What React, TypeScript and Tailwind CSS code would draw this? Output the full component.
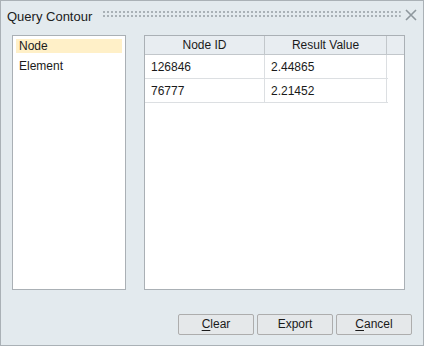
import React from "react";

const rows = [
  { id: "126846", v: "2.44865" },
  { id: "76777", v: "2.21452" },
];

export default function App() {
  return (
    <div
      className="w-[424px] h-[346px] border border-[#aab1b6] bg-[#e3eaee] flex flex-col text-[12px] text-[#1a1a1a]"
      style={{ fontFamily: '"Liberation Sans", Arial, sans-serif' }}
    >
      <div className="h-[34px] flex items-start pt-[7px] pl-[6px] pr-[6px]">
        <span className="text-[13px] leading-[17px] text-[#202020]">Query Contour</span>
        <svg className="ml-[11px] mt-[3px] flex-1 h-[8px]" height="8">
          <defs>
            <pattern id="dots" width="4" height="4" patternUnits="userSpaceOnUse">
              <rect x="0" y="0" width="2" height="2" fill="#a9b1b6" />
            </pattern>
          </defs>
          <rect x="0" y="0" width="100%" height="6" fill="url(#dots)" />
        </svg>
        <svg className="ml-[4px] mt-[1px]" width="12" height="12" viewBox="0 0 12 12">
          <path d="M1 1 L11 11 M11 1 L1 11" stroke="#8e979d" strokeWidth="1.6" />
        </svg>
      </div>
      <div className="flex pl-[11px] gap-[18px]">
        <div className="w-[114px] h-[255px] border border-[#aab0b5] bg-white p-[3px]">
          <div className="h-[14px] bg-[#fff0c8] pl-[3px] leading-[14px]">Node</div>
          <div className="h-[14px] pl-[3px] mt-[6px] leading-[14px]">Element</div>
        </div>
        <div className="w-[261px] h-[255px] border border-[#aab0b5] bg-white flex flex-col">
          <div className="flex h-[19px] bg-[#e8edf1] border-b border-[#c2c7cb]">
            <div className="w-[120px] border-r border-[#c2c7cb] text-center leading-[18px]">Node ID</div>
            <div className="w-[122px] border-r border-[#c2c7cb] text-center leading-[18px]">Result Value</div>
            <div className="flex-1" />
          </div>
          {rows.map((r) => (
            <div key={r.id} className="flex h-[24px] w-[243px] border-b border-[#dcdfe2]">
              <div className="w-[120px] border-r border-[#dcdfe2] pl-[6px] leading-[24px]">{r.id}</div>
              <div className="w-[122px] border-r border-[#dcdfe2] pl-[6px] leading-[24px]">{r.v}</div>
            </div>
          ))}
        </div>
      </div>
      <div className="flex justify-end gap-[3px] pr-[11px] mt-[24px]">
        {[
          { l: "C", r: "lear" },
          { l: "", r: "Export" },
          { l: "C", r: "ancel" },
        ].map((b) => (
          <div
            key={b.r}
            className="w-[76px] h-[21px] border border-[#adadad] rounded-[2px] bg-[#e5e8ea] flex items-center justify-center leading-[19px]"
          >
            {b.l && <span className="underline underline-offset-2">{b.l}</span>}
            <span>{b.r}</span>
          </div>
        ))}
      </div>
    </div>
  );
}
